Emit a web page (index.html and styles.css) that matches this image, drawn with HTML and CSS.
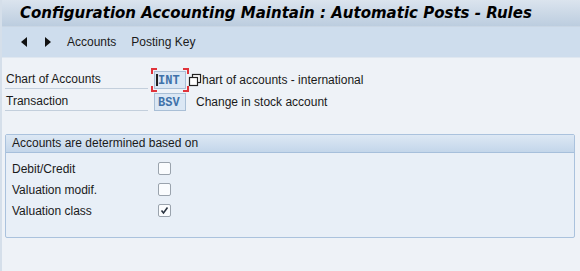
FILE: index.html
```html
<!DOCTYPE html>
<html lang="en">
<head>
    <meta charset="UTF-8">
    <title>Configuration Accounting Maintain</title>
    <link rel="stylesheet" href="styles.css">
</head>
<body>
    <div class="window">
        <div class="title-bar">
            <h1>Configuration Accounting Maintain : Automatic Posts - Rules</h1>
        </div>
        <div class="toolbar">
            <span class="arrow left"></span>
            <span class="arrow right"></span>
            <span class="tool">Accounts</span>
            <span class="tool">Posting Key</span>
        </div>

        <div class="content">
            <div class="field-row">
                <div class="label">Chart of Accounts</div>
                <div class="input focused">INT</div>
                <svg class="help" width="14" height="14" viewBox="0 0 14 14">
                    <rect x="4.5" y="1.5" width="8" height="8" fill="#fff" stroke="#222" stroke-width="1.2"/>
                    <rect x="1.5" y="4.5" width="8" height="8" fill="#fff" stroke="#222" stroke-width="1.2"/>
                </svg>
                <div class="desc tight">hart of accounts - international</div>
            </div>
            <div class="field-row">
                <div class="label">Transaction</div>
                <div class="input">BSV</div>
                <div class="desc">Change in stock account</div>
            </div>

            <div class="group">
                <div class="group-header">Accounts are determined based on</div>
                <div class="group-body">
                    <div class="check-row">
                        <div class="check-label">Debit/Credit</div>
                        <span class="checkbox"></span>
                    </div>
                    <div class="check-row">
                        <div class="check-label">Valuation modif.</div>
                        <span class="checkbox"></span>
                    </div>
                    <div class="check-row">
                        <div class="check-label">Valuation class</div>
                        <span class="checkbox checked">
                            <svg width="9" height="9" viewBox="0 0 9 9">
                                <path d="M1.5 4.5 L3.5 7 L7.5 1.5" fill="none" stroke="#2a3340" stroke-width="1.6"/>
                            </svg>
                        </span>
                    </div>
                </div>
            </div>
        </div>
    </div>
</body>
</html>
```

FILE: styles.css
```css
body {
    margin: 0;
    font-family: "Liberation Sans", Arial, sans-serif;
    font-size: 12px;
    color: #1a1a1a;
    background: #eef2f7;
}

.window {
    width: 580px;
    height: 271px;
    overflow: hidden;
    border-left: 2px solid #d5dfea;
    box-sizing: border-box;
}

/* Title */
.title-bar {
    height: 27px;
    background: linear-gradient(#dbe4ee, #bccddf);
    border-bottom: 1px solid #c9d6e4;
    padding-left: 18px;
    box-sizing: border-box;
}

h1 {
    margin: 0;
    font-family: "DejaVu Sans", Verdana, sans-serif;
    font-style: italic;
    font-weight: bold;
    font-size: 15px;
    line-height: 26px;
    color: #000;
}

/* Toolbar */
.toolbar {
    height: 31px;
    background: #cedded;
    border-bottom: 1px solid #dfe7f0;
    display: flex;
    align-items: center;
    padding-left: 19px;
    box-sizing: border-box;
}

.arrow {
    width: 0;
    height: 0;
    border-top: 5px solid transparent;
    border-bottom: 5px solid transparent;
    margin-right: 18px;
}

.arrow.left {
    border-right: 6px solid #111;
}

.arrow.right {
    border-left: 6px solid #111;
    margin-right: 16px;
}

.tool {
    margin-right: 15px;
    color: #1a1a1a;
}

/* Fields */
.content {
    padding: 11px 5px 0 3px;
}

.field-row {
    display: flex;
    align-items: center;
    height: 21px;
    margin-bottom: 1px;
}

.label {
    width: 143px;
    height: 19px;
    line-height: 19px;
    border-bottom: 1px solid #c3cfdc;
    padding-left: 1px;
    box-sizing: border-box;
}

.input {
    position: relative;
    width: 32px;
    height: 18px;
    margin-left: 6px;
    line-height: 18px;
    padding-left: 3px;
    box-sizing: border-box;
    background: #dbe7f4;
    border: 1px solid #a9bfd6;
    font-family: "Courier New", "Liberation Mono", monospace;
    font-weight: bold;
    font-size: 12px;
    color: #3f72aa;
}

.input.focused::before {
    content: "";
    position: absolute;
    left: 1px;
    top: 2px;
    width: 2px;
    height: 12px;
    background: #222;
}

/* red focus corners */
.input.focused::after {
    content: "";
    position: absolute;
    left: -4px;
    top: -4px;
    right: -4px;
    bottom: -4px;
    background:
        linear-gradient(#e0333a, #e0333a) left top / 6px 2px no-repeat,
        linear-gradient(#e0333a, #e0333a) left top / 2px 6px no-repeat,
        linear-gradient(#e0333a, #e0333a) right top / 6px 2px no-repeat,
        linear-gradient(#e0333a, #e0333a) right top / 2px 6px no-repeat,
        linear-gradient(#e0333a, #e0333a) left bottom / 6px 2px no-repeat,
        linear-gradient(#e0333a, #e0333a) left bottom / 2px 6px no-repeat,
        linear-gradient(#e0333a, #e0333a) right bottom / 6px 2px no-repeat,
        linear-gradient(#e0333a, #e0333a) right bottom / 2px 6px no-repeat;
}

.help {
    margin-left: 2px;
}

.desc {
    margin-left: 10px;
}

.desc.tight {
    margin-left: 0;
}

/* Group box */
.group {
    margin-top: 22px;
    background: #e8eff7;
    border: 1px solid #aac2dd;
    border-radius: 2px;
}

.group-header {
    height: 17px;
    line-height: 17px;
    padding-left: 6px;
    background: linear-gradient(#dde8f4, #c3d6ea);
    border-bottom: 1px solid #a6bfdb;
}

.group-body {
    padding: 5px 0 16px 0;
}

.check-row {
    display: flex;
    align-items: center;
    height: 21px;
}

.check-label {
    width: 152px;
    padding-left: 6px;
    box-sizing: border-box;
}

.checkbox {
    width: 11px;
    height: 11px;
    border: 1px solid #9aa3ad;
    border-radius: 2px;
    background: #fafcfe;
    display: flex;
    align-items: center;
    justify-content: center;
}
```
